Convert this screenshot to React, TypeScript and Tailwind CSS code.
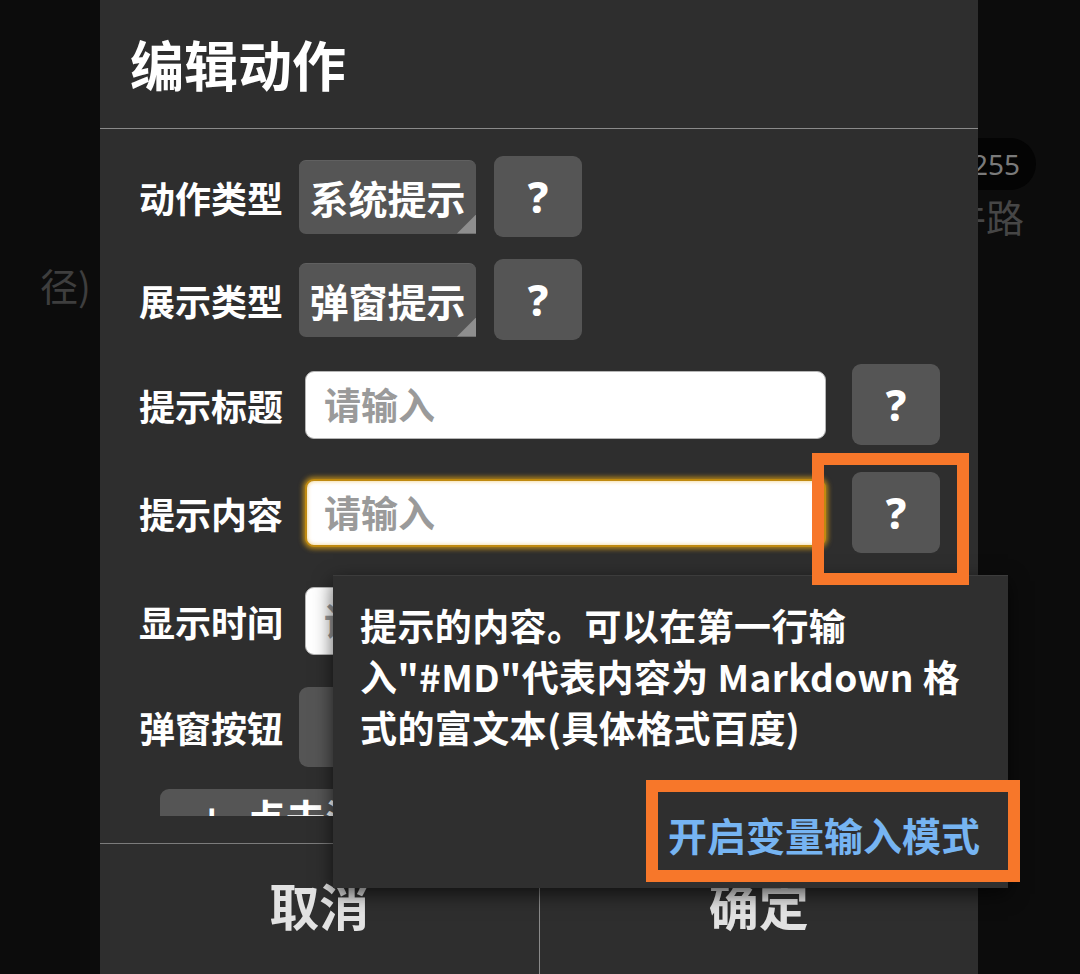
import React from "react";

function Help() {
  return (
    <div className="flex h-[81px] w-[88px] shrink-0 items-center justify-center rounded-[9px] bg-[#555555] font-['Noto_Sans',sans-serif] text-[42px] font-extrabold leading-none text-white">
      ?
    </div>
  );
}

function Label({ children }: { children: React.ReactNode }) {
  return (
    <div className="w-[160px] shrink-0 text-[36px] font-bold leading-none text-white">
      {children}
    </div>
  );
}

function Dropdown({ children }: { children: React.ReactNode }) {
  return (
    <div className="relative flex h-[74px] w-[177px] shrink-0 items-center justify-center overflow-hidden rounded-[7px] rounded-br-none border-t border-[#606060] bg-[#555555] text-[39px] font-bold leading-none text-white">
      {children}
      <div className="absolute bottom-0 right-0 h-[19px] w-[19px] bg-[#8e8e8e] [clip-path:polygon(100%_0,100%_100%,0_100%)]" />
    </div>
  );
}

export default function App() {
  return (
    <div className="relative h-[974px] w-[1080px] overflow-hidden bg-[#0c0c0c] font-['Noto_Sans_CJK_SC',sans-serif]">
      {/* background page fragments */}
      <div className="absolute left-[940px] top-[138px] flex h-[52px] w-[96px] items-center justify-end rounded-full bg-[#040404] pr-[16px] font-['Noto_Sans',sans-serif] text-[28px] leading-none text-[#7a7a7a]">
        255
      </div>
      <div className="absolute left-[948px] top-[197px] text-[38px] leading-none text-[#464646]">
        件路
      </div>
      <div className="absolute left-[40px] top-[266px] text-[38px] leading-none text-[#3e3e3e]">
        径)
      </div>

      {/* dialog */}
      <div className="absolute left-[100px] top-0 flex h-[974px] w-[878px] flex-col bg-[#2e2e2e]">
        <div className="flex h-[128px] shrink-0 items-center pl-[30px] text-[54px] font-bold leading-none text-white">
          编辑动作
        </div>
        <div className="h-px shrink-0 bg-[#8a8a8a]" />
        <div className="flex h-[687px] shrink-0 flex-col overflow-hidden pl-[39px] pr-[38px] pt-[27px]">
          <div className="flex h-[81px] shrink-0 items-center">
            <Label>动作类型</Label>
            <Dropdown>系统提示</Dropdown>
            <div className="ml-[18px]">
              <Help />
            </div>
          </div>
          <div className="mt-[22px] flex h-[81px] shrink-0 items-center">
            <Label>展示类型</Label>
            <Dropdown>弹窗提示</Dropdown>
            <div className="ml-[18px]">
              <Help />
            </div>
          </div>
          <div className="mt-[24px] flex h-[81px] shrink-0 items-center">
            <Label>提示标题</Label>
            <div className="ml-[6px] flex h-[68px] flex-1 items-center rounded-[9px] border border-[#b5b5b5] bg-white pl-[18px] text-[37px] font-bold leading-none text-[#9a9a9a]">
              请输入
            </div>
            <div className="ml-[26px]">
              <Help />
            </div>
          </div>
          <div className="mt-[27px] flex h-[81px] shrink-0 items-center">
            <Label>提示内容</Label>
            <div className="ml-[6px] flex h-[68px] flex-1 items-center rounded-[9px] border-2 border-[#c08a10] bg-white pl-[17px] text-[37px] font-bold leading-none text-[#9a9a9a] shadow-[0_0_5px_2px_rgba(220,160,20,0.75),inset_0_0_4px_rgba(230,170,40,0.6)]">
              请输入
            </div>
            <div className="ml-[26px]">
              <Help />
            </div>
          </div>
          <div className="mt-[27px] flex h-[81px] shrink-0 items-center">
            <Label>显示时间</Label>
            <div className="ml-[6px] flex h-[68px] flex-1 items-center rounded-[9px] border border-[#b5b5b5] bg-white pl-[18px] text-[37px] font-bold leading-none text-[#9a9a9a]">
              请输入
            </div>
            <div className="ml-[26px] w-[88px]" />
          </div>
          <div className="mt-[25px] flex h-[81px] shrink-0 items-center">
            <Label>弹窗按钮</Label>
            <div className="flex h-[80px] w-[300px] items-center justify-center rounded-[9px] bg-[#555555] text-[36px] font-bold text-white">
              添加按钮
            </div>
          </div>
          <div className="ml-[21px] mt-[22px] flex h-[70px] w-[420px] shrink-0 items-start gap-[22px] rounded-t-[9px] bg-[#555555] pl-[40px] pt-[8px] text-[40px] font-bold leading-none text-white">
            <span>+</span>
            <span>点击添加</span>
          </div>
        </div>
        <div className="h-[27px] shrink-0" />
        <div className="h-px shrink-0 bg-[#7c7c7c]" />
        <div className="flex flex-1">
          <div className="flex flex-1 items-center justify-center pb-[10px] text-[50px] font-bold leading-none text-[#e2e2e2]">
            取消
          </div>
          <div className="w-px bg-[#8a8a8a]" />
          <div className="flex flex-1 items-center justify-center pb-[10px] text-[50px] font-bold leading-none text-[#e2e2e2]">
            确定
          </div>
        </div>
      </div>

      {/* popover */}
      <div className="absolute left-[333px] top-[575px] flex h-[313px] w-[675px] flex-col border-t border-[#3c3c3c] bg-[#2f2f2f] pl-[27px] pr-[20px] pt-[24px] shadow-[0_6px_18px_rgba(0,0,0,0.65)]">
        <div className="whitespace-nowrap text-[37px] font-bold leading-[51px] tracking-[0.4px] text-white">
          提示的内容。可以在第一行输
          <br />
          入"#MD"代表内容为 Markdown 格
          <br />
          式的富文本(具体格式百度)
        </div>
        <div className="mt-auto flex justify-end pb-[34px] pr-[8px] text-[39px] font-bold leading-none text-[#76b4f2]">
          开启变量输入模式
        </div>
      </div>

      {/* annotation boxes */}
      <div className="absolute left-[812px] top-[453px] h-[132px] w-[157px] border-[12px] border-[#f7772a]" />
      <div className="absolute left-[646px] top-[780px] h-[102px] w-[374px] border-[12px] border-[#f7772a]" />
    </div>
  );
}
